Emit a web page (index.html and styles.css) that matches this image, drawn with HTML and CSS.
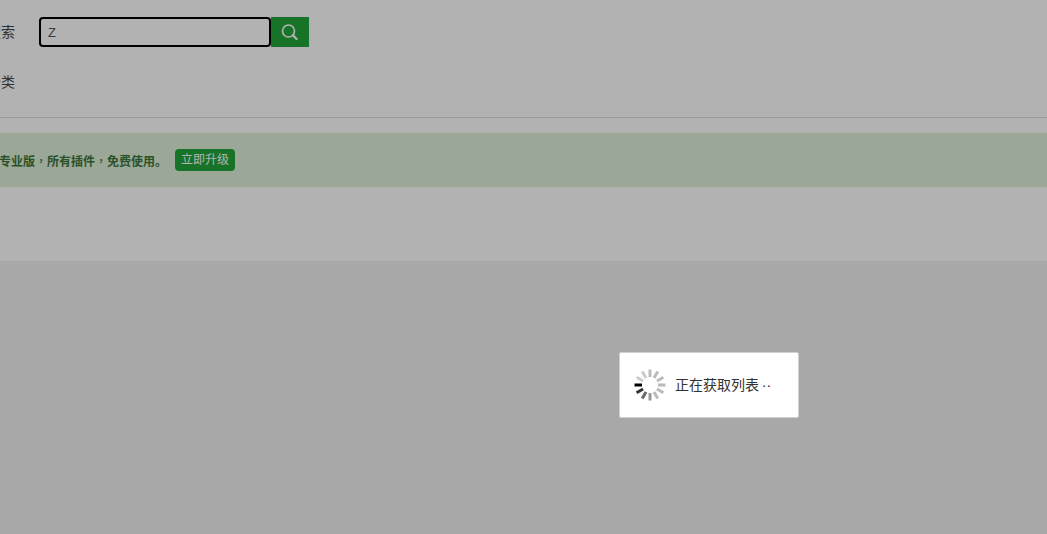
FILE: index.html
```html
<!DOCTYPE html>
<html lang="zh-CN">
<head>
    <meta charset="UTF-8">
    <title>软件管理</title>
    <link rel="stylesheet" href="styles.css">
</head>
<body>
    <div class="panel">
        <div class="search-row">
            <span class="row-label">搜索</span>
            <input class="search-input" type="text" value="Z">
            <button class="search-btn" type="button">
                <svg width="18" height="18" viewBox="0 0 18 18" fill="none" stroke="currentColor">
                    <circle cx="7.5" cy="8" r="6" stroke-width="1.7"/>
                    <path d="M12 12.4L15.6 16" stroke-width="2.2" stroke-linecap="round"/>
                </svg>
            </button>
        </div>
        <div class="type-row">
            <span class="row-label">分类</span>
        </div>
        <div class="alert">
            <span class="alert-text">升级专业版<span class="comma" lang="zh-TW">，</span>所有插件<span class="comma" lang="zh-TW">，</span>免费使用。</span>
            <a class="upgrade-btn" href="#">立即升级</a>
        </div>
    </div>

    <div class="mask"></div>
    <div class="loading-box">
        <svg class="spinner" width="32" height="32" viewBox="-16 -16 32 32" stroke-width="3">
            <path d="M0 -15.5V-8" stroke="#bbb"/>
            <path d="M0 -15.5V-8" stroke="#bbb" transform="rotate(30)"/>
            <path d="M0 -15.5V-8" stroke="#bbb" transform="rotate(60)"/>
            <path d="M0 -15.5V-8" stroke="#bbb" transform="rotate(90)"/>
            <path d="M0 -15.5V-8" stroke="#bbb" transform="rotate(120)"/>
            <path d="M0 -15.5V-8" stroke="#bbb" transform="rotate(150)"/>
            <path d="M0 -15.5V-8" stroke="#999" transform="rotate(180)"/>
            <path d="M0 -15.5V-8" stroke="#666" transform="rotate(210)"/>
            <path d="M0 -15.5V-8" stroke="#333" transform="rotate(240)"/>
            <path d="M0 -15.5V-8" stroke="#000" transform="rotate(270)"/>
            <path d="M0 -15.5V-8" stroke="#ccc" transform="rotate(300)"/>
            <path d="M0 -15.5V-8" stroke="#ccc" transform="rotate(330)"/>
        </svg>
        <span class="loading-text">正在获取列表&#8201;··</span>
    </div>
</body>
</html>
```
FILE: styles.css
```css
html, body {
    height: 100%;
}
body {
    margin: 0;
    overflow: hidden;
    background-color: #f1f1f1;
    font-family: "Liberation Sans", "Noto Sans CJK SC", sans-serif;
    font-size: 14px;
    color: #555;
}
.panel {
    height: 261px;
    box-sizing: border-box;
    margin-left: -30px;
    padding-top: 17px;
    background-color: #fff;
}
.search-row {
    display: flex;
    align-items: center;
    height: 30px;
}
.row-label {
    width: 45px;
    padding-bottom: 2px;
    text-align: right;
    color: #444;
}
.search-input {
    width: 232px;
    height: 30px;
    box-sizing: border-box;
    margin-left: 24px;
    padding: 0 7px;
    border: 2px solid #000;
    border-radius: 4px;
    outline: none;
    background: #fff;
    font-family: inherit;
    font-size: 13px;
    color: #555;
}
.search-btn {
    display: flex;
    align-items: center;
    justify-content: center;
    width: 38px;
    height: 30px;
    padding: 0;
    border: none;
    background-color: #20a53a;
    color: #fff;
}
.type-row {
    display: flex;
    align-items: center;
    height: 30px;
    margin-top: 20px;
    padding-bottom: 20px;
    border-bottom: 1px solid #ddd;
}
.alert {
    display: flex;
    align-items: center;
    height: 54px;
    box-sizing: border-box;
    margin-top: 15px;
    padding-left: 5px;
    background-color: #dff0d8;
    color: #3c763d;
    font-size: 12px;
    font-weight: bold;
}
.alert-text {
    width: 200px;
}
.comma {
    font-family: "Noto Sans CJK TC", sans-serif;
    font-weight: normal;
}
.upgrade-btn {
    padding: 0 6px;
    height: 22px;
    line-height: 22px;
    border-radius: 4px;
    background-color: #20a53a;
    color: #fff;
    font-weight: normal;
    text-decoration: none;
}
.mask {
    position: fixed;
    top: 0;
    left: 0;
    right: 0;
    bottom: 0;
    background-color: rgba(0,0,0,0.3);
}
.loading-box {
    position: fixed;
    top: 352px;
    left: 619px;
    display: flex;
    align-items: center;
    width: 180px;
    height: 66px;
    box-sizing: border-box;
    padding-left: 14px;
    border: 1px solid #d0d0d0;
    border-radius: 2px;
    background-color: #fff;
    color: #333;
}
.spinner {
    flex: none;
}
.loading-text {
    margin-left: 9px;
    padding-bottom: 2px;
}
```
